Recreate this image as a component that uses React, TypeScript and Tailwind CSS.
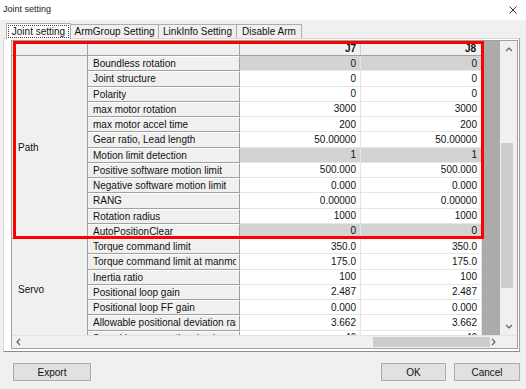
import React from 'react';

interface Row {
  name: string;
  j7: string;
  j8: string;
  locked?: boolean;
}

const pathRows: Row[] = [
  { name: 'Boundless rotation', j7: '0', j8: '0', locked: true },
  { name: 'Joint structure', j7: '0', j8: '0' },
  { name: 'Polarity', j7: '0', j8: '0' },
  { name: 'max motor rotation', j7: '3000', j8: '3000' },
  { name: 'max motor accel time', j7: '200', j8: '200' },
  { name: 'Gear ratio, Lead length', j7: '50.00000', j8: '50.00000' },
  { name: 'Motion limit detection', j7: '1', j8: '1', locked: true },
  { name: 'Positive software motion limit', j7: '500.000', j8: '500.000' },
  { name: 'Negative software motion limit', j7: '0.000', j8: '0.000' },
  { name: 'RANG', j7: '0.00000', j8: '0.00000' },
  { name: 'Rotation radius', j7: '1000', j8: '1000' },
  { name: 'AutoPositionClear', j7: '0', j8: '0', locked: true },
];

const servoRows: Row[] = [
  { name: 'Torque command limit', j7: '350.0', j8: '350.0' },
  { name: 'Torque command limit at manmode', j7: '175.0', j8: '175.0' },
  { name: 'Inertia ratio', j7: '100', j8: '100' },
  { name: 'Positional loop gain', j7: '2.487', j8: '2.487' },
  { name: 'Positional loop FF gain', j7: '0.000', j8: '0.000' },
  { name: 'Allowable positional deviation range', j7: '3.662', j8: '3.662' },
  { name: 'Speed loop proportional gain', j7: '46', j8: '46' },
];

const tabs = [
  { label: 'Joint setting', w: 'w-[65px]' },
  { label: 'ArmGroup Setting', w: 'w-[88px]' },
  { label: 'LinkInfo Setting', w: 'w-[78px]' },
  { label: 'Disable Arm', w: 'w-[65px]' },
];

const Chevron = ({ dir }: { dir: 'up' | 'down' | 'left' | 'right' }) => {
  const d = {
    up: 'M1 5 L4 2 L7 5',
    down: 'M1 2 L4 5 L7 2',
    left: 'M5 1 L2 4 L5 7',
    right: 'M2 1 L5 4 L2 7',
  }[dir];
  return (
    <svg width="8" height="8" viewBox="0 0 8 8">
      <path d={d} fill="none" stroke="#606060" strokeWidth="1.2" />
    </svg>
  );
};

const DataRow = ({ row }: { row: Row }) => {
  const valueBg = row.locked ? 'bg-[#d3d3d3]' : 'bg-white';
  return (
    <div className="flex h-[15.25px] shrink-0">
      <div className="w-[152px] shrink-0 pl-[5px] pr-[3px] flex items-center bg-[#f0f0f0] border-r border-r-[#a0a0a0] border-b border-b-[#a0a0a0] border-t border-t-white">
        <div className="overflow-hidden whitespace-nowrap">{row.name}</div>
      </div>
      <div className={`w-[121px] shrink-0 pr-[4px] flex items-center justify-end border-r border-b border-[#e6e6e6] ${valueBg}`}>
        {row.j7}
      </div>
      <div className={`w-[121px] shrink-0 pr-[4px] flex items-center justify-end border-r border-b border-[#e6e6e6] ${valueBg}`}>
        {row.j8}
      </div>
    </div>
  );
};

export default function App() {
  return (
    <div className="w-[526px] h-[389px] bg-[#f0f0f0] flex flex-col text-[10px] text-[#111] overflow-hidden font-['Liberation_Sans',Arial,sans-serif]">
      {/* Title bar */}
      <div className="h-[20px] shrink-0 bg-white flex items-center justify-between pl-[3px] pr-[9px]">
        <span className="text-[9px] text-[#222]">Joint setting</span>
        <svg width="8" height="8" viewBox="0 0 8 8">
          <path d="M0.5 0.5 L7.5 7.5 M7.5 0.5 L0.5 7.5" stroke="#333" strokeWidth="1" />
        </svg>
      </div>

      {/* Tabs */}
      <div className="h-[18px] shrink-0 flex items-end pl-[6px]">
        {tabs.map((t, i) =>
          i === 0 ? (
            <div key={t.label} className={`${t.w} h-[16px] bg-white border border-b-0 border-[#adadad] p-[1px] relative z-10 -mb-px`}>
              <div className="w-full h-full border border-dotted border-[#444] flex items-center justify-center pb-[1px]">
                {t.label}
              </div>
            </div>
          ) : (
            <div key={t.label} className={`${t.w} h-[14px] bg-[#f0f0f0] border border-l-0 border-b-0 border-[#adadad] flex items-center justify-center`}>
              {t.label}
            </div>
          )
        )}
      </div>

      {/* Tab panel */}
      <div className="ml-[3px] w-[517px] h-[314px] shrink-0 bg-white border border-[#d9d9d9] border-r-[#a0a0a0] border-b-[#8c8c8c] pl-[7px] pt-[1px]">
        {/* Grid */}
        <div className="relative w-[507px] h-[309px] border border-[#a0a0a0] flex flex-col">
          <div className="flex h-[294px]">
            {/* Rows area */}
            <div className="w-[488px] h-full bg-[#ababab] overflow-hidden">
              <div className="w-[470px] flex flex-col">
                {/* Header */}
                <div className="flex h-[15px] shrink-0 bg-[#f0f0f0] border-b border-[#a0a0a0]">
                  <div className="w-[76px] border-r border-[#a0a0a0]" />
                  <div className="w-[152px] border-r border-[#a0a0a0]" />
                  <div className="w-[121px] border-r border-[#d0d0d0] flex items-center justify-end pr-[4px] font-bold">J7</div>
                  <div className="w-[121px] border-r border-[#d0d0d0] flex items-center justify-end pr-[5px] font-bold">J8</div>
                </div>

                {/* Path */}
                <div className="flex shrink-0">
                  <div className="w-[76px] shrink-0 bg-[#f0f0f0] border-r border-b border-[#a0a0a0] flex items-center pl-[6px]">Path</div>
                  <div className="flex flex-col">
                    {pathRows.map((r) => (
                      <DataRow key={r.name} row={r} />
                    ))}
                  </div>
                </div>

                {/* Servo */}
                <div className="flex shrink-0">
                  <div className="w-[76px] shrink-0 bg-[#f0f0f0] border-r border-[#a0a0a0] flex items-start pl-[6px] pt-[43px]">Servo</div>
                  <div className="flex flex-col">
                    {servoRows.map((r) => (
                      <DataRow key={r.name} row={r} />
                    ))}
                  </div>
                </div>
              </div>
            </div>

            {/* Vertical scrollbar */}
            <div className="w-[17px] h-full bg-[#f0f0f0] flex flex-col items-center">
              <div className="h-[17px] flex items-center justify-center">
                <Chevron dir="up" />
              </div>
              <div className="flex-1 w-full relative">
                <div className="absolute left-[1px] w-[12px] top-[85px] h-[145px] bg-[#cdcdcd]" />
              </div>
              <div className="h-[17px] flex items-center justify-center">
                <Chevron dir="down" />
              </div>
            </div>
          </div>

          {/* Horizontal scrollbar */}
          <div className="flex h-[13px] border-t border-[#e3e3e3]">
            <div className="w-[488px] h-full bg-[#f0f0f0] flex items-center">
              <div className="w-[13px] flex justify-center">
                <Chevron dir="left" />
              </div>
              <div className="flex-1 h-full relative">
                <div className="absolute top-[1px] bottom-[1px] left-[348px] w-[117px] bg-[#cdcdcd]" />
              </div>
              <div className="w-[13px] flex justify-center">
                <Chevron dir="right" />
              </div>
            </div>
            <div className="w-[17px] h-full bg-[#f0f0f0]" />
          </div>

          {/* Red highlight box */}
          <div className="absolute left-[1px] top-0 w-[471px] h-[198px] border-[3px] border-[#ff0000] pointer-events-none" />
        </div>
      </div>

      {/* Buttons */}
      <div className="flex items-start mt-[11px] pl-[13px] pr-[6px]">
        <button className="w-[78px] h-[18px] bg-[#e1e1e1] border border-[#adadad]">Export</button>
        <div className="flex-1" />
        <button className="w-[65px] h-[18px] bg-[#e1e1e1] border border-[#adadad]">OK</button>
        <button className="w-[66px] h-[18px] ml-[8px] bg-[#e1e1e1] border border-[#adadad]">Cancel</button>
      </div>
    </div>
  );
}
